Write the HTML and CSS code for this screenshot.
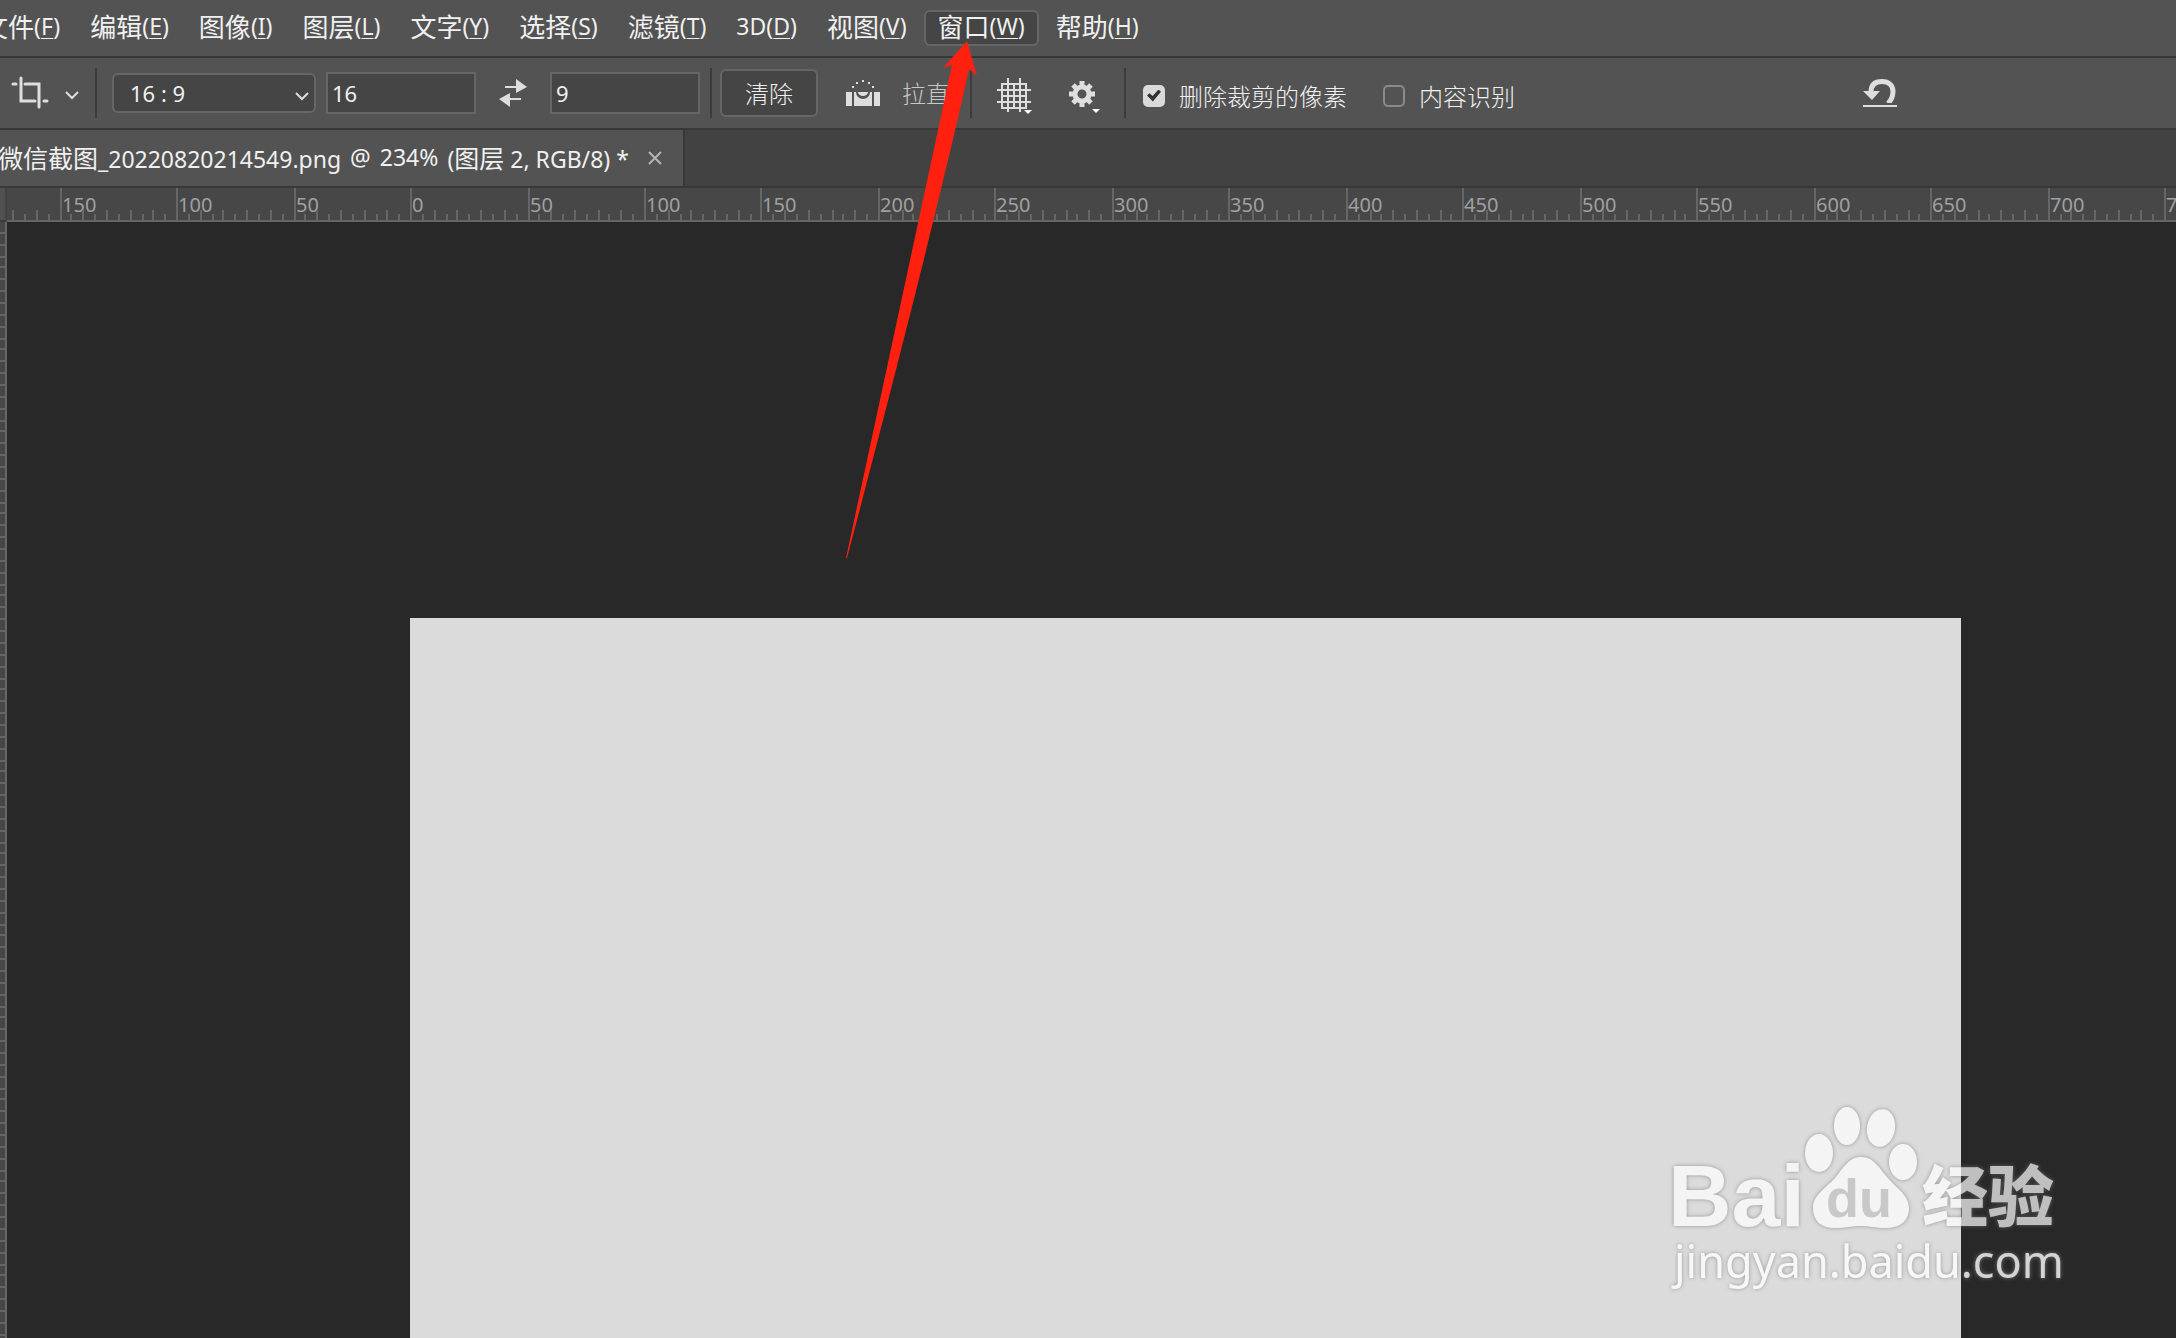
FILE: index.html
```html
<!DOCTYPE html>
<html lang="zh-CN">
<head>
<meta charset="utf-8">
<title>微信截图_20220820214549.png</title>
<link rel="stylesheet" href="styles.css">
</head>
<body>
<nav class="menubar">
  <button class="menu" type="button">文件<span class="key">(<u>F</u>)</span></button>
  <button class="menu" type="button">编辑<span class="key">(<u>E</u>)</span></button>
  <button class="menu" type="button">图像<span class="key">(<u>I</u>)</span></button>
  <button class="menu" type="button">图层<span class="key">(<u>L</u>)</span></button>
  <button class="menu" type="button">文字<span class="key">(<u>Y</u>)</span></button>
  <button class="menu" type="button">选择<span class="key">(<u>S</u>)</span></button>
  <button class="menu" type="button">滤镜<span class="key">(<u>T</u>)</span></button>
  <button class="menu" type="button"><span class="key">3D(<u>D</u>)</span></button>
  <button class="menu" type="button">视图<span class="key">(<u>V</u>)</span></button>
  <button class="menu menu-open" type="button">窗口<span class="key">(<u>W</u>)</span></button>
  <button class="menu" type="button">帮助<span class="key">(<u>H</u>)</span></button>
</nav>

<form class="options">
  <button class="tool crop-tool" type="button" aria-label="裁剪工具">
    <svg width="38" height="36" viewBox="0 0 38 36" fill="none" stroke="#dedede" stroke-width="3" stroke-linecap="round"><path d="M2 9h3M10 3v23h14M14 9h14v23M33 26h3"/></svg>
    <svg class="tool-arrow" width="14" height="10" viewBox="0 0 14 10" fill="none" stroke="#dedede" stroke-width="2"><path d="M1 2l6 6 6-6"/></svg>
  </button>
  <span class="divider"></span>
  <span class="ratio">
    <select class="ratio-select" aria-label="比例"><option>16 : 9</option></select>
    <svg class="ratio-arrow" width="14" height="10" viewBox="0 0 14 10" fill="none" stroke="#dedede" stroke-width="2"><path d="M1 2l6 6 6-6"/></svg>
  </span>
  <input class="size" type="text" value="16" aria-label="宽度">
  <button class="tool swap" type="button" aria-label="互换">
    <svg width="28" height="28" viewBox="0 0 28 28" fill="#dedede"><path d="M6 7h11V0l11 8-11 6V9H6zM22 19H11v-5L0 20l11 8v-7h11z"/></svg>
  </button>
  <input class="size" type="text" value="9" aria-label="高度">
  <span class="divider"></span>
  <button class="clear" type="button">清除</button>
  <button class="tool straighten" type="button">
    <svg width="34" height="26" viewBox="0 0 34 26" fill="#dedede"><path d="M0 12h6v14H0zM28 12h6v14h-6zM8 12h2a7 7 0 0 0 14 0h2v14H8zM12 12h10a5 4 0 0 1-10 0zM6 6h2v2H6zM10 2h2v2h-2zM16 0h2v2h-2zM22 2h2v2h-2zM26 6h2v2h-2z"/></svg>
    <span>拉直</span>
  </button>
  <span class="divider"></span>
  <button class="tool overlay" type="button" aria-label="叠加选项">
    <svg width="36" height="38" viewBox="0 0 36 38"><path d="M5 6h24v24H5zM11 0v34M23 0v34M0 12h34M0 24h34M17 6v24M5 18h24" fill="none" stroke="#dedede" stroke-width="2"/><path d="M27 32h8l-4 4z" fill="#fff"/></svg>
  </button>
  <button class="tool gear" type="button" aria-label="裁剪设置">
    <svg width="32" height="34" viewBox="0 0 32 34"><g fill="none" stroke="#dedede"><circle cx="13" cy="14" r="7" stroke-width="5"/><path d="M13 1v5M13 22v5M0 14h5M21 14h5M4 5l4 4M18 19l4 4M22 5l-4 4M8 19l-4 4" stroke-width="5"/></g><path d="M23 29h8l-4 4z" fill="#fff"/></svg>
  </button>
  <span class="divider"></span>
  <label class="check"><input type="checkbox" checked>删除裁剪的像素</label>
  <label class="check"><input type="checkbox">内容识别</label>
  <button class="tool reset" type="button" aria-label="复位">
    <svg width="34" height="28" viewBox="0 0 34 28"><path d="M0 12h17L9 21zM0 26h34v2H0z" fill="#dedede"/><path d="M8 13C8 6 12 2.500 19 2.500c7 0 11 4 11 10 0 4-1 8-5 12" fill="none" stroke="#dedede" stroke-width="5"/><path d="M18 24h14v2H18z" fill="#535353"/></svg>
  </button>
</form>

<div class="tabs">
  <div class="tab">
    <span class="tab-title">
      <span><b>微信截图</b>_20220820214549.png</span>
      <span>@</span>
      <span>234%</span>
      <span>(<b>图层</b> 2, RGB/8) *</span>
    </span>
    <button class="tab-close" type="button" aria-label="关闭"><svg width="14" height="14" viewBox="0 0 14 14" fill="none" stroke="#b4b4b4" stroke-width="2"><path d="M1 1l12 12M13 1L1 13"/></svg></button>
  </div>
</div>

<main class="workspace">
  <div class="corner"></div>
  <div class="ruler-x" id="ruler-x"></div>
  <div class="ruler-y" id="ruler-y"></div>
  <div class="stage"><div class="artboard"></div></div>
  <svg class="watermark" width="450" height="230" viewBox="0 0 450 230" role="img" aria-label="Baidu 经验">
    <g class="mark">
      <text class="bai" x="28" y="146">Bai</text>
      <ellipse cx="179" cy="73" rx="14" ry="19"/>
      <ellipse cx="207" cy="46" rx="13" ry="19"/>
      <ellipse cx="241" cy="48" rx="14" ry="19" transform="rotate(10 241 48)"/>
      <ellipse cx="263" cy="82" rx="14" ry="18"/>
      <path d="M221 77C234 77 239 88 247 97C256 108 269 115 269 128C269 142 259 148 245 148C235 148 231 146 221 146C211 146 206 148 195 148C181 148 173 141 173 128C173 115 186 108 195 98C204 87 209 77 221 77Z"/>
      <text class="jingyan" x="282" y="141">经验</text>
    </g>
    <text class="du" x="186" y="137">du</text>
    <text class="site" x="34" y="198">jingyan.baidu.com</text>
  </svg>
</main>

<svg class="pointer" width="140" height="520" viewBox="0 0 140 520" aria-hidden="true"><path d="M127 1L137 36 129 29C112 108 70 280 7 518L6 518 112 25 103 28Z" fill="#ff2010"/></svg>
<script src="rulers.js"></script>
</body>
</html>
```
FILE: styles.css
```css
* { box-sizing: border-box; }
body {
  margin: 0;
  height: 100vh;
  display: flex;
  flex-direction: column;
  position: relative;
  overflow: hidden;
  background: #282828;
  color: #f0f0f0;
  font: 22px/28px "Noto Sans", "Noto Sans CJK SC", sans-serif;
}
button, input, select { font: inherit; color: inherit; margin: 0; }
button { background: none; border: 0; padding: 0; }
svg { display: block; flex: none; }

.menubar {
  height: 58px;
  flex: none;
  display: flex;
  align-items: flex-start;
  gap: 4px;
  padding-top: 10px;
  background: #535353;
  border-bottom: 2px solid #383838;
  margin-left: -31px;
  white-space: nowrap;
}
.menu {
  height: 36px;
  padding: 0 11px;
  border: 2px solid transparent;
  border-radius: 6px;
  font: 26px/28px "Noto Sans CJK SC", sans-serif;
  display: flex;
  align-items: flex-start;
}
.menu-open { padding: 0 12px; background: #454545; border-color: #666; }
.key { font: 23px/28px "Noto Sans", sans-serif; }
.key u { text-underline-offset: 3px; text-decoration-thickness: 1px; }

.options {
  height: 72px;
  flex: none;
  display: flex;
  align-items: center;
  background: #535353;
  border-bottom: 2px solid #383838;
  padding-left: 11px;
}
.tool { display: flex; align-items: center; flex: none; }
.divider { width: 2px; height: 50px; background: #3c3c3c; flex: none; }
.crop-tool { gap: 16px; margin-right: 16px; }
.tool-arrow { margin-top: 4px; }
.ratio { position: relative; margin: 0 10px 0 15px; }
.ratio-select {
  appearance: none;
  display: block;
  width: 204px;
  height: 40px;
  padding: 0 16px;
  background: #454545;
  border: 2px solid #666;
  border-radius: 6px;
}
.ratio-arrow { position: absolute; right: 7px; top: 18px; pointer-events: none; }
.size {
  width: 150px;
  height: 42px;
  padding: 0 4px;
  background: #454545;
  border: 2px solid #666;
  border-radius: 0;
}
.swap { margin: 0 23px; }
.size + .divider { margin: 0 8px 0 10px; }
.clear {
  width: 98px;
  height: 48px;
  background: #454545;
  border: 2px solid #666;
  border-radius: 6px;
  font: 300 24px/32px "Noto Sans CJK SC", sans-serif;
}
.straighten {
  gap: 22px;
  margin: 0 20px 0 28px;
  color: #c8c8c8;
  font: 300 24px/32px "Noto Sans CJK SC", sans-serif;
}
.overlay { margin: 0 36px 0 25px; padding-top: 8px; }
.gear { margin-right: 23px; padding-top: 8px; }
.check {
  display: flex;
  align-items: center;
  gap: 14px;
  margin: 0 19px 0 17px;
  padding-top: 5px;
  font: 300 24px/32px "Noto Sans CJK SC", sans-serif;
}
.check input {
  appearance: none;
  width: 22px;
  height: 22px;
  border: 2px solid #8a8a8a;
  border-radius: 5px;
  display: grid;
  place-items: center;
}
.check input:checked { background: #dadada; border-color: #dadada; }
.check input:checked::before {
  content: "";
  width: 14px;
  height: 12px;
  background: #333;
  clip-path: polygon(0 50%, 18% 32%, 40% 55%, 82% 0, 100% 18%, 42% 100%);
}
.reset { margin-left: auto; margin-right: 279px; }

.tabs {
  height: 58px;
  flex: none;
  display: flex;
  background: #424242;
  border-bottom: 2px solid #383838;
}
.tab {
  display: flex;
  align-items: center;
  width: 685px;
  justify-content: space-between;
  padding-right: 21px;
  background: #535353;
  border-right: 2px solid #383838;
}
.tab-title { display: flex; gap: 9px; font-size: 23px; white-space: nowrap; margin-left: -2px; }
.tab-title b { font: 25px/28px "Noto Sans CJK SC", sans-serif; }

.workspace {
  flex: 1;
  min-height: 0;
  position: relative;
  display: grid;
  grid-template: 34px minmax(0, 1fr) / 7px minmax(0, 1fr);
}
.corner { background: #505050; border-right: 2px solid #424242; border-bottom: 2px solid #3c3c3c; }
.ruler-x {
  display: flex;
  align-items: flex-end;
  overflow: hidden;
  background: #474747;
  border-bottom: 2px solid #666;
  padding-left: 5px;
}
.ruler-y {
  overflow: hidden;
  background: #474747;
  border-right: 2px solid #666;
  padding-top: 10px;
}
.tick-x {
  flex: none;
  height: 6px;
  border-left: 2px solid #666;
  white-space: nowrap;
  color: #a0a0a0;
  font: 20px/34px "Noto Sans", sans-serif;
}
.tick-ten { height: 10px; }
.tick-major { height: 32px; }
.tick-y { border-top: 2px solid #666; }
.stage { display: flex; padding: 396px 215px 0 403px; background: #282828; }
.artboard { flex: 1; background: #dbdbdb; }

.watermark { position: absolute; right: 86px; bottom: 28px; fill: #fff; }
.mark { opacity: 0.7; filter: drop-shadow(0 0 2px #777); }
.bai { font: bold 88px "Liberation Sans", sans-serif; }
.jingyan { font: 900 66px "Noto Sans CJK SC", sans-serif; }
.du { font: bold 54px "Liberation Sans", sans-serif; fill: #c8c8c8; }
.site { font: 45px "Noto Sans", sans-serif; opacity: 0.8; filter: drop-shadow(0 0 2px #888); }
.pointer { position: absolute; left: 840px; top: 40px; pointer-events: none; }
```
FILE: rulers.js
```js
// Ticks fall every 5 units and snap to the 2px device grid.
const snap = (origin, step, i) => Math.round((origin + step * i) / 2) * 2;

function buildRuler(id, origin, step, first, last, horizontal) {
  const ruler = document.getElementById(id);
  for (let i = first; i <= last; i++) {
    const tick = document.createElement("div");
    const length = snap(origin, step, i + 1) - snap(origin, step, i);
    tick.className = horizontal ? "tick-x" : "tick-y";
    if (horizontal) {
      tick.style.width = length + "px";
      if (i % 10 === 0) {
        tick.classList.add("tick-major");
        tick.textContent = Math.abs(i * 5);
      } else if (i % 2 === 0) {
        tick.classList.add("tick-ten");
      }
    } else {
      tick.style.height = length + "px";
    }
    ruler.append(tick);
  }
}

buildRuler("ruler-x", 410.1, 11.695, -34, 151, true);
buildRuler("ruler-y", 618.4, 11.72, -33, 61, false);
```
